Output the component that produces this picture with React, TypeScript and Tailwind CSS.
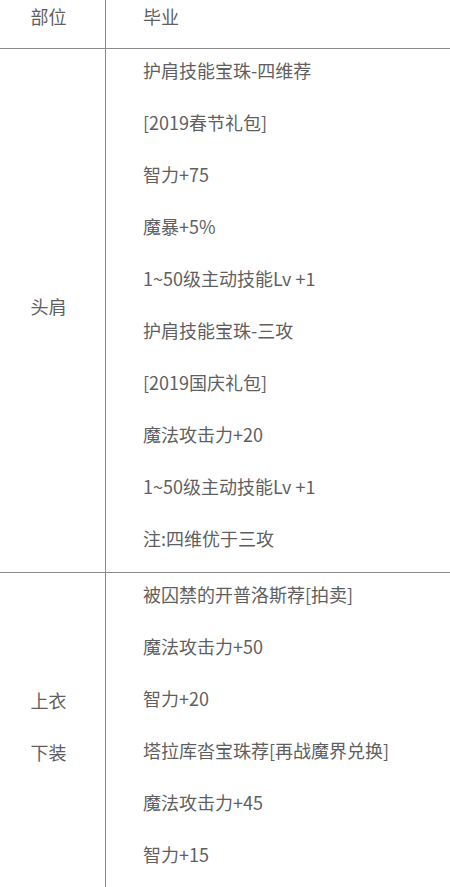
const sections = [
  {
    part: ["头肩"],
    items: [
      "护肩技能宝珠-四维荐",
      "[2019春节礼包]",
      "智力+75",
      "魔暴+5%",
      "1~50级主动技能Lv +1",
      "护肩技能宝珠-三攻",
      "[2019国庆礼包]",
      "魔法攻击力+20",
      "1~50级主动技能Lv +1",
      "注:四维优于三攻",
    ],
  },
  {
    part: ["上衣", "下装"],
    items: [
      "被囚禁的开普洛斯荐[拍卖]",
      "魔法攻击力+50",
      "智力+20",
      "塔拉库沓宝珠荐[再战魔界兑换]",
      "魔法攻击力+45",
      "智力+15",
    ],
  },
];

export default function App() {
  return (
    <div
      className="h-[887px] w-[450px] overflow-hidden bg-white text-[18px] leading-[26px] text-[#5f5f5f]"
      style={{ fontFamily: '"Noto Sans CJK SC", "Noto Sans", sans-serif' }}
    >
      {/* header row */}
      <div className="flex h-[49px] border-b border-[#8a8a8a]">
        <div className="w-[106px] shrink-0 border-r border-[#8a8a8a] pt-[3px] pr-[8px] text-center">
          部位
        </div>
        <div className="flex-1 pt-[3px] pl-[37px]">毕业</div>
      </div>

      {sections.map((s, i) => (
        <div key={i} className="flex border-b border-[#8a8a8a]">
          <div className="flex w-[106px] shrink-0 flex-col items-center justify-center gap-[26px] border-r border-[#8a8a8a] pr-[8px] pb-[10px]">
            {s.part.map((p) => (
              <p key={p}>{p}</p>
            ))}
          </div>
          <div className="flex flex-1 flex-col gap-[26px] pt-[8px] pb-[21px] pl-[37px]">
            {s.items.map((t, j) => (
              <p key={j} className="whitespace-nowrap">
                {t}
              </p>
            ))}
          </div>
        </div>
      ))}
    </div>
  );
}
